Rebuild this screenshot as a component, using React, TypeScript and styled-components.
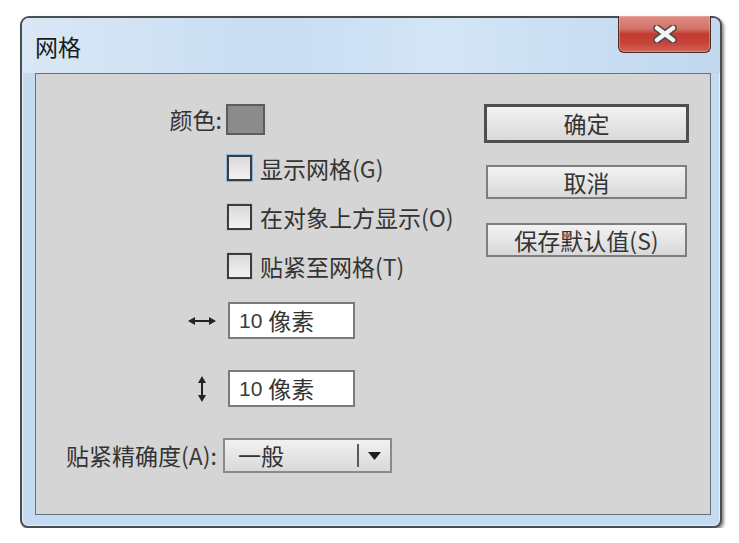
import * as React from 'react';
import styled, { createGlobalStyle } from 'styled-components';

const GlobalStyle = createGlobalStyle`
    html, body {
        margin: 0;
        background: #ffffff;
    }
    body {
        font-family: "Noto Sans CJK SC", "Noto Sans", sans-serif;
        color: #333333;
    }
`;

const Page = styled.div`
    padding: 16px 0 0 20px;
`;

const Window = styled.div`
    box-sizing: border-box;
    width: 702px;
    height: 512px;
    display: flex;
    flex-direction: column;
    border: 2px solid #4a4e53;
    border-radius: 9px 9px 8px 8px;
    background: #c4dbf1;
    box-shadow: 2px 2px 3px rgba(0, 0, 0, 0.45), inset 0 0 0 1px rgba(255, 255, 255, 0.55);
    padding: 0 9px 11px 13px;
`;

const TitleBar = styled.div`
    height: 55px;
    display: flex;
    align-items: center;
    justify-content: space-between;
    margin: 0 -9px 0 -13px;
    padding: 0 9px 0 13px;
    border-radius: 7px 7px 0 0;
    background: linear-gradient(to right, #dae7f5 0%, #c8ddf2 35%, #d3e5f6 60%, #c1d8ef 100%);
`;

const Title = styled.h1`
    margin: 0;
    font-size: 23px;
    font-weight: 400;
    line-height: 1;
    color: #1c1c1c;
    padding-top: 2px;
`;

const CloseButton = styled.button`
    align-self: flex-start;
    margin-top: -2px;
    width: 93px;
    height: 37px;
    padding: 0;
    display: flex;
    align-items: center;
    justify-content: center;
    border: 1px solid #4d2a26;
    border-top: none;
    border-radius: 0 0 6px 6px;
    background: linear-gradient(
        to bottom,
        #dc8c84 0%,
        #d4736a 35%,
        #c13a30 50%,
        #c64338 75%,
        #d2655b 100%
    );
    box-shadow: inset 0 0 0 1px rgba(255, 200, 190, 0.35);
`;

const Panel = styled.div`
    flex: 1;
    display: flex;
    justify-content: space-between;
    border: 1px solid #66717c;
    background: #d5d5d5;
`;

const Form = styled.div`
    display: flex;
    flex-direction: column;
    padding-top: 30px;
`;

const Row = styled.div<{ $mt?: number; $labelWidth?: number; $gap?: number }>`
    display: grid;
    grid-template-columns: ${({ $labelWidth }) => $labelWidth ?? 186}px auto;
    column-gap: ${({ $gap }) => $gap ?? 4}px;
    align-items: center;
    margin-top: ${({ $mt }) => $mt ?? 0}px;
`;

const Label = styled.span<{ $pr?: number }>`
    justify-self: end;
    padding-right: ${({ $pr }) => $pr ?? 0}px;
    font-size: 23px;
    line-height: 1;
    white-space: nowrap;
`;

const Swatch = styled.div`
    box-sizing: border-box;
    width: 39px;
    height: 31px;
    border: 2px solid #5c5c5c;
    background: #8b8b8b;
`;

const CheckLine = styled.label`
    height: 28px;
    display: flex;
    align-items: center;
    gap: 8px;
    font-size: 23px;
    line-height: 1;
    white-space: nowrap;
`;

const CheckBox = styled.span<{ $focused?: boolean }>`
    box-sizing: border-box;
    width: 25px;
    height: 26px;
    margin-left: 1px;
    border: 2px solid #3d3d3d;
    background: linear-gradient(to bottom, #dadada, #f2f2f2);
    box-shadow: 0 0 0 1px ${({ $focused }) => ($focused ? '#8db3d9' : '#c9c9c9')};
`;

const Accel = styled.span`
    color: #3a3a3a;
`;

const IconBox = styled.span`
    justify-self: end;
    width: 28px;
    margin-right: 6px;
    display: flex;
    align-items: center;
    justify-content: center;
`;

const NumberField = styled.div`
    box-sizing: border-box;
    width: 127px;
    height: 37px;
    margin-left: 2px;
    display: flex;
    align-items: center;
    padding-left: 9px;
    gap: 6px;
    border: 2px solid #7b7b7b;
    background: #ffffff;
    font-size: 23px;
    line-height: 1;
`;

const Digits = styled.span`
    font-family: "Liberation Sans", sans-serif;
    font-size: 21px;
    color: #3b3b3b;
`;

const Select = styled.div`
    box-sizing: border-box;
    width: 169px;
    height: 35px;
    display: flex;
    align-items: center;
    border: 2px solid #8a8a8a;
    background: linear-gradient(to bottom, #f1f1f1, #d9d9d9);
    font-size: 23px;
    line-height: 1;
`;

const SelectValue = styled.span`
    flex: 1;
    padding-left: 13px;
`;

const SelectDivider = styled.span`
    width: 2px;
    height: 23px;
    background: #5a5a5a;
`;

const SelectArrow = styled.span`
    width: 31px;
    display: flex;
    justify-content: center;
`;

const Buttons = styled.div`
    width: 205px;
    display: flex;
    flex-direction: column;
    align-items: center;
    padding-top: 30px;
    margin-right: 21px;
`;

const Button = styled.button<{ $primary?: boolean; $mt?: number }>`
    box-sizing: border-box;
    width: ${({ $primary }) => ($primary ? 205 : 201)}px;
    height: ${({ $primary }) => ($primary ? 39 : 34)}px;
    margin-top: ${({ $mt }) => $mt ?? 0}px;
    padding: 0;
    border: ${({ $primary }) => ($primary ? '3px solid #4f4f4f' : '2px solid #7e7e7e')};
    background: linear-gradient(to bottom, #f2f2f2 0%, #e6e6e6 50%, #d8d8d8 100%);
    font-family: inherit;
    font-size: 23px;
    line-height: 1;
    color: #333333;
    white-space: nowrap;
`;

function CloseGlyph() {
    return (
        <svg width="26" height="18" viewBox="0 0 26 18">
            <path d="M5 3 L21 15 M21 3 L5 15" stroke="#4a4a4a" strokeWidth="7.5" strokeLinecap="round" />
            <path d="M5 3 L21 15 M21 3 L5 15" stroke="#f4f4f4" strokeWidth="4.5" strokeLinecap="round" />
        </svg>
    );
}

function HorizontalArrows() {
    return (
        <svg width="28" height="10" viewBox="0 0 28 10">
            <line x1="5" y1="5" x2="23" y2="5" stroke="#222" strokeWidth="2" />
            <polygon points="0,5 7,1 7,9" fill="#222" />
            <polygon points="28,5 21,1 21,9" fill="#222" />
        </svg>
    );
}

function VerticalArrows() {
    return (
        <svg width="10" height="26" viewBox="0 0 10 26">
            <line x1="5" y1="5" x2="5" y2="21" stroke="#222" strokeWidth="2" />
            <polygon points="5,0 1,7 9,7" fill="#222" />
            <polygon points="5,26 1,19 9,19" fill="#222" />
        </svg>
    );
}

function DownTriangle() {
    return (
        <svg width="13" height="8" viewBox="0 0 13 8">
            <polygon points="0,0 13,0 6.5,8" fill="#1e1e1e" />
        </svg>
    );
}

const checks = [
    { text: '显示网格', key: 'G', focused: true, mt: 19 },
    { text: '在对象上方显示', key: 'O', focused: false, mt: 21 },
    { text: '贴紧至网格', key: 'T', focused: false, mt: 21 },
];

function App() {
    return (
        <Page>
            <GlobalStyle />
            <Window>
                <TitleBar>
                    <Title>网格</Title>
                    <CloseButton aria-label="关闭">
                        <CloseGlyph />
                    </CloseButton>
                </TitleBar>
                <Panel>
                    <Form>
                        <Row>
                            <Label>颜色:</Label>
                            <Swatch />
                        </Row>
                        {checks.map((c) => (
                            <Row key={c.key} $mt={c.mt}>
                                <span />
                                <CheckLine>
                                    <CheckBox $focused={c.focused} />
                                    <span>
                                        {c.text}
                                        <Accel>({c.key})</Accel>
                                    </span>
                                </CheckLine>
                            </Row>
                        ))}
                        <Row $mt={22}>
                            <IconBox>
                                <HorizontalArrows />
                            </IconBox>
                            <NumberField>
                                <Digits>10</Digits>像素
                            </NumberField>
                        </Row>
                        <Row $mt={31}>
                            <IconBox>
                                <VerticalArrows />
                            </IconBox>
                            <NumberField>
                                <Digits>10</Digits>像素
                            </NumberField>
                        </Row>
                        <Row $mt={31} $labelWidth={187} $gap={0}>
                            <Label $pr={6}>
                                贴紧精确度<Accel>(A)</Accel>:
                            </Label>
                            <Select>
                                <SelectValue>一般</SelectValue>
                                <SelectDivider />
                                <SelectArrow>
                                    <DownTriangle />
                                </SelectArrow>
                            </Select>
                        </Row>
                    </Form>
                    <Buttons>
                        <Button $primary>确定</Button>
                        <Button $mt={22}>取消</Button>
                        <Button $mt={24}>
                            保存默认值<Accel>(S)</Accel>
                        </Button>
                    </Buttons>
                </Panel>
            </Window>
        </Page>
    );
}

export default React.memo(App);
